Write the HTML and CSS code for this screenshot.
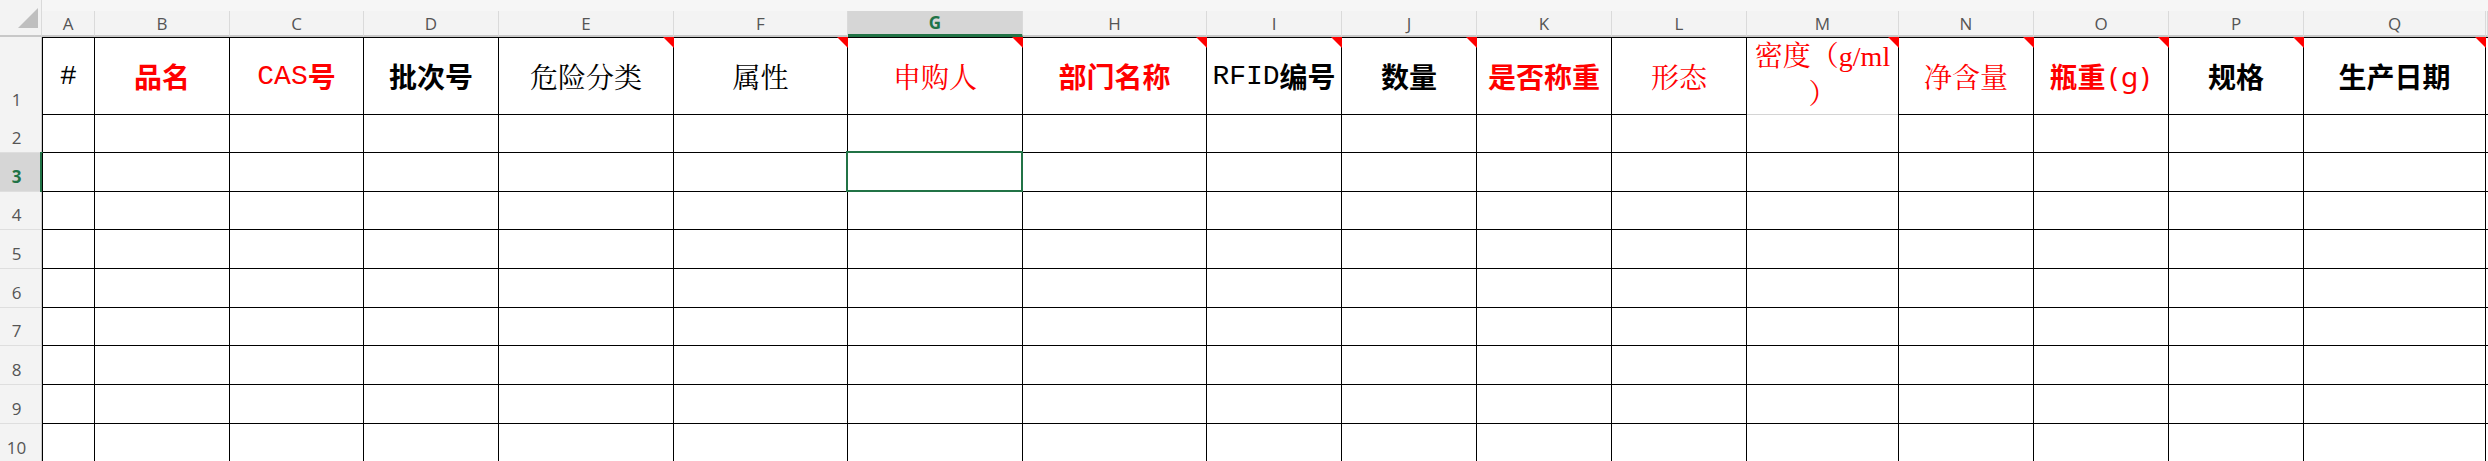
FILE: index.html
```html
<!DOCTYPE html>
<html lang="zh-CN">
<head>
  <meta charset="UTF-8">
  <meta name="viewport" content="width=device-width, initial-scale=1.0">
  <title>试剂入库登记表</title>
  <link rel="stylesheet" href="styles.css">
</head>
<body>
  <div class="sheet">
    <!-- Column letters -->
    <div class="row col-heads">
      <div class="corner">
        <svg width="20" height="20" viewBox="0 0 20 20"><polygon points="20,0 20,20 0,20" fill="#bfbfbf"/></svg>
      </div>
      <div class="col-head">A</div>
      <div class="col-head">B</div>
      <div class="col-head">C</div>
      <div class="col-head">D</div>
      <div class="col-head">E</div>
      <div class="col-head">F</div>
      <div class="col-head selected">G</div>
      <div class="col-head">H</div>
      <div class="col-head">I</div>
      <div class="col-head">J</div>
      <div class="col-head">K</div>
      <div class="col-head">L</div>
      <div class="col-head">M</div>
      <div class="col-head">N</div>
      <div class="col-head">O</div>
      <div class="col-head">P</div>
      <div class="col-head">Q</div>
      <div class="col-head"></div>
    </div>

    <!-- Title row -->
    <div class="row title-row">
      <div class="row-head">1</div>
      <div class="cell first mono">#</div>
      <div class="cell red sans">品名</div>
      <div class="cell red"><span class="mono">CAS</span><span class="sans">号</span></div>
      <div class="cell sans">批次号</div>
      <div class="cell serif note">危险分类</div>
      <div class="cell serif note">属性</div>
      <div class="cell red serif note">申购人</div>
      <div class="cell red sans note">部门名称</div>
      <div class="cell note"><span class="mono">RFID</span><span class="sans">编号</span></div>
      <div class="cell sans note">数量</div>
      <div class="cell red sans">是否称重</div>
      <div class="cell red serif">形态</div>
      <div class="cell red serif note wrap">密度（g/ml<br>）</div>
      <div class="cell red serif note">净含量</div>
      <div class="cell red note"><span class="sans">瓶重</span><span class="unit">(g)</span></div>
      <div class="cell sans note">规格</div>
      <div class="cell sans note">生产日期</div>
      <div class="cell tail"></div>
    </div>

    <div id="rows"></div>
  </div>

  <script>
    // empty data rows 2..10
    const rowsBox = document.getElementById('rows');
    const shortRows = [4, 7];
    const activeRow = 3;
    const activeCol = 6; // G

    for (let r = 2; r <= 10; r++) {
      const row = document.createElement('div');
      row.className = 'row body-row' + (shortRows.includes(r) ? ' short' : '');

      const head = document.createElement('div');
      head.className = 'row-head' + (r === activeRow ? ' selected' : '');
      head.textContent = r;
      row.appendChild(head);

      for (let c = 0; c < 18; c++) {
        const cell = document.createElement('div');
        cell.className = 'cell';
        if (c === 0) cell.classList.add('first');
        if (c === 17) cell.classList.add('tail');
        if (r === activeRow && c === activeCol) cell.classList.add('active');
        row.appendChild(cell);
      }
      rowsBox.appendChild(row);
    }
  </script>
</body>
</html>
```

FILE: styles.css
```css
body {
  margin: 0;
  background: #fff;
  font-family: "Open Sans", "Noto Sans", sans-serif;
  overflow: hidden;
}

.sheet {
  width: 2488px;
}

.row {
  display: grid;
  grid-template-columns: 42px 53px 135px 134px 135px 175px 174px 175px 184px 135px 135px 135px 135px 152px 135px 135px 135px 182px 1fr;
}

/* Column letters */
.col-heads {
  height: 37px;
  padding-top: 11px;
  box-sizing: border-box;
  background: #f6f6f6;
}

.corner {
  margin-top: -11px;
  display: flex;
  align-items: center;
  justify-content: flex-end;
  padding-right: 3px;
  background: #f3f3f3;
  border-bottom: 2px solid #c8c8c8;
  border-right: 1px solid #dadada;
}

.col-head {
  display: flex;
  align-items: center;
  justify-content: center;
  background: #f3f3f3;
  color: #555;
  font-size: 17px;
  border-right: 1px solid #dadada;
  border-bottom: 2px solid #c8c8c8;
}

.col-head.selected {
  background: #d6d6d6;
  color: #217346;
  font-weight: 700;
  border-bottom: 3px solid #217346;
}

/* Row numbers */
.row-head {
  position: relative;
  display: flex;
  align-items: flex-end;
  justify-content: center;
  padding: 0 8px 3px 0;
  background: #f3f3f3;
  color: #555;
  font-size: 17px;
  line-height: 22px;
  border-right: 1px solid #c8c8c8;
  border-bottom: 1px solid #dedede;
}

.row-head.selected {
  background: #d6d6d6;
  color: #217346;
  font-weight: 700;
}

.row-head.selected::after {
  content: '';
  position: absolute;
  top: -1px;
  bottom: -1px;
  right: -2px;
  width: 3px;
  background: #217346;
}

/* Cells */
.cell {
  position: relative;
  display: flex;
  align-items: center;
  justify-content: center;
  border-right: 1px solid #000;
  border-bottom: 1px solid #000;
  white-space: nowrap;
}

.cell.first {
  border-left: 1px solid #000;
}

.cell.tail {
  border-right: none;
}

.body-row {
  height: 39px;
}

.body-row.short {
  height: 38px;
}

.title-row {
  height: 77px;
}

.title-row .cell {
  border-top: 1px solid #000;
  font-size: 28px;
  color: #000;
}

.title-row .cell.red {
  color: #ff0000;
}

.sans {
  font-family: "Noto Sans CJK SC", sans-serif;
  font-weight: 700;
}

.serif {
  font-family: "Liberation Serif", "Noto Serif CJK SC", "Noto Sans CJK SC", serif;
  font-weight: 400;
}

.mono {
  font-family: "Liberation Mono", "Noto Sans CJK SC", monospace;
  font-weight: 400;
}

.unit {
  font-family: "Noto Sans", sans-serif;
  font-weight: 400;
  letter-spacing: 3px;
  padding-left: 4px;
}

.title-row .cell.wrap {
  text-align: center;
  line-height: 38px;
  white-space: normal;
  border-bottom-color: #d4d4d4;
}

/* comment marker in the top right corner */
.note::after {
  content: '';
  position: absolute;
  top: -1px;
  right: -1px;
  width: 11px;
  height: 11px;
  background: #ff0000;
  clip-path: polygon(0 0, 100% 0, 100% 100%);
}

/* selected cell */
.cell.active::after {
  content: '';
  position: absolute;
  top: -2px;
  left: -2px;
  right: -1px;
  bottom: -1px;
  border: 2px solid #217346;
  z-index: 2;
}
```
